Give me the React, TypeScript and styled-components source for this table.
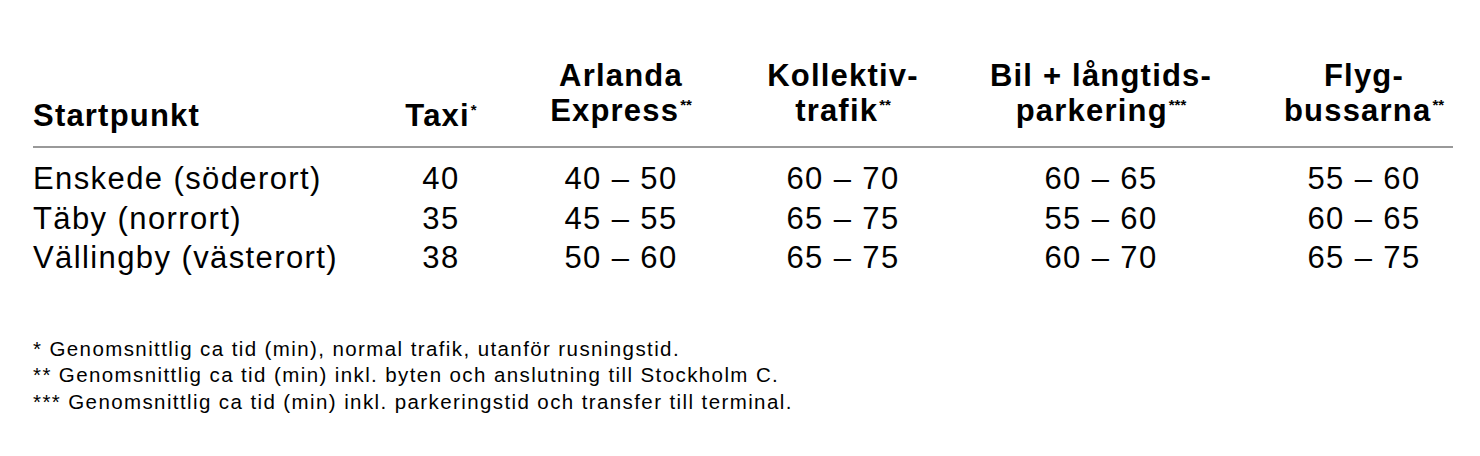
import React from 'react';
import styled, { createGlobalStyle } from 'styled-components';

interface Column {
  lines: string[];
  note?: string;
  align: 'left' | 'center';
}

interface TravelRow {
  start: string;
  values: string[];
}

const GRID = '347px 122px 238px 206px 310px 216px';

const columns: Column[] = [
  { lines: ['Startpunkt'], align: 'left' },
  { lines: ['Taxi'], note: '*', align: 'center' },
  { lines: ['Arlanda', 'Express'], note: '**', align: 'center' },
  { lines: ['Kollektiv-', 'trafik'], note: '**', align: 'center' },
  { lines: ['Bil + långtids-', 'parkering'], note: '***', align: 'center' },
  { lines: ['Flyg-', 'bussarna'], note: '**', align: 'center' }
];

const rows: TravelRow[] = [
  { start: 'Enskede (söderort)', values: ['40', '40 – 50', '60 – 70', '60 – 65', '55 – 60'] },
  { start: 'Täby (norrort)', values: ['35', '45 – 55', '65 – 75', '55 – 60', '60 – 65'] },
  { start: 'Vällingby (västerort)', values: ['38', '50 – 60', '65 – 75', '60 – 70', '65 – 75'] }
];

const footnotes: string[] = [
  '* Genomsnittlig ca tid (min), normal trafik, utanför rusningstid.',
  '** Genomsnittlig ca tid (min) inkl. byten och anslutning till Stockholm C.',
  '*** Genomsnittlig ca tid (min) inkl. parkeringstid och transfer till terminal.'
];

const App: React.FC = () => {
  return (
    <>
      <GlobalStyle />
      <Page>
        <HeaderRow>
          {columns.map((col) => (
            <HeaderCell
              key={col.lines.join('')}
              $align={col.align}
              $single={col.lines.length === 1}
            >
              {col.lines.map((line, i) => (
                <HeaderLine key={line}>
                  {line}
                  {i === col.lines.length - 1 && col.note && <Note>{col.note}</Note>}
                </HeaderLine>
              ))}
            </HeaderCell>
          ))}
        </HeaderRow>
        <Rule />
        <Body>
          {rows.map((row) => (
            <Row key={row.start}>
              <Cell $align="left">{row.start}</Cell>
              {row.values.map((value, i) => (
                <Cell key={i} $align="center">{value}</Cell>
              ))}
            </Row>
          ))}
        </Body>
        <Footnotes>
          {footnotes.map((note) => (
            <Footnote key={note}>{note}</Footnote>
          ))}
        </Footnotes>
      </Page>
    </>
  );
};

const GlobalStyle = createGlobalStyle`
  html, body {
    margin: 0;
    padding: 0;
    background: #ffffff;
  }

  body {
    font-family: 'Liberation Sans', Arial, Helvetica, sans-serif;
    color: #000000;
  }
`;

const Page = styled.div`
  padding: 58px 0 0 33px;
`;

const HeaderRow = styled.div`
  display: grid;
  grid-template-columns: ${GRID};
  align-items: end;
  padding-bottom: 18px;
`;

const HeaderCell = styled.div<{ $align: 'left' | 'center'; $single: boolean }>`
  display: flex;
  flex-direction: column;
  align-items: ${(p) => (p.$align === 'left' ? 'flex-start' : 'center')};
  margin-bottom: ${(p) => (p.$single ? '-5px' : '0')};
  font-size: 31px;
  font-weight: 700;
  letter-spacing: 1.2px;
  line-height: 35px;
`;

const HeaderLine = styled.span`
  white-space: nowrap;
`;

const Note = styled.sup`
  font-size: 15px;
  letter-spacing: 0;
  line-height: 0;
  vertical-align: 0.72em;
  margin-left: 1px;
`;

const Rule = styled.div`
  width: 1420px;
  height: 2px;
  background: #999999;
`;

const Body = styled.div`
  padding-top: 11px;
`;

const Row = styled.div`
  display: grid;
  grid-template-columns: ${GRID};
`;

const Cell = styled.div<{ $align: 'left' | 'center' }>`
  font-size: 31px;
  letter-spacing: 1.4px;
  line-height: 39.5px;
  text-align: ${(p) => p.$align};
  white-space: nowrap;
`;

const Footnotes = styled.div`
  margin-top: 58px;
`;

const Footnote = styled.p`
  margin: 0;
  font-size: 20.5px;
  letter-spacing: 1.4px;
  line-height: 26.7px;
  white-space: nowrap;
`;

export default App;
